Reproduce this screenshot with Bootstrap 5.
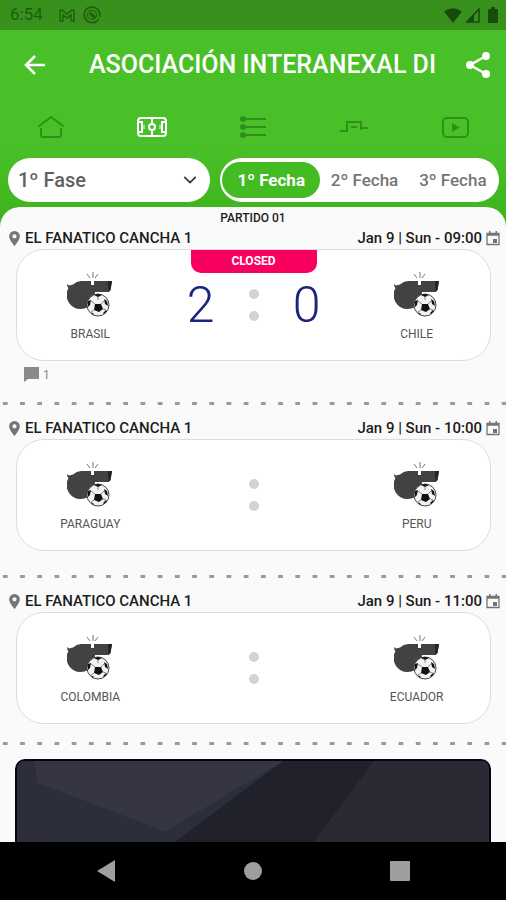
<!DOCTYPE html>
<html lang="es">
<head>
<meta charset="utf-8">
<meta name="viewport" content="width=device-width, initial-scale=1">
<title>Asociación Interanexal</title>
<link href="https://cdn.jsdelivr.net/npm/bootstrap@5.3.0/dist/css/bootstrap.min.css" rel="stylesheet">
<style>
  body { font-family: Roboto, "Liberation Sans", sans-serif; background: #fafafa; color: #1c1c1c; }
  svg { display: block; flex: none; }
  .ink { color: #1f5d0d; }
  .status-bar { height: 30px; background: #38901d; font-size: 17px; padding: 0 8px 0 10px; }
  .green-zone { background: linear-gradient(#4ac028 60%, #3bb31a); padding-bottom: 20px; }
  .title-bar { height: 70px; padding: 0 15px 0 22px; }
  .title-text { font-size: 25px; font-weight: 500; margin: 0 20px 0 41px; line-height: 32px; }
  .tab-link { height: 54px; color: #2f8f16; }
  .tab-link.active { color: #fff; }
  .filters { padding: 4px 7px 5px 8px; gap: 10px; }
  .phase { flex: 0 1 202px; height: 44px; border: 0; font-size: 20px; font-weight: 500; color: #616161; padding: 0 36px 0 10px; background-position: right 11px center; background-size: 18px 14px; }
  .rounds { height: 44px; padding: 4px 2px; flex: 1 1 0; }
  .round-btn { border: 0; background: none; border-radius: 18px; font-size: 17px; font-weight: 500; color: #757575; padding: 0 8px; line-height: 36px; }
  .round-btn.active { background: #43bb22; color: #fff; font-weight: 700; padding: 0 13px; }
  .panel { background: #fafafa; border-radius: 20px 20px 0 0; margin-top: -20px; }
  .panel::-webkit-scrollbar { display: none; }
  .stage { font-size: 12px; font-weight: 500; line-height: 22px; }
  .match-head { font-size: 15px; font-weight: 500; line-height: 18px; padding: 0 6px 2px 8px; color: #1c1c1c; }
  .match-box { margin: 0 15px 0 16px; height: 112px; border: 1px solid #dcdcdc; border-radius: 28px; background: #fff; }
  .team { width: 31%; font-size: 12px; line-height: 16px; color: #555; padding-top: 22px; gap: 8px; }
  .score { font-size: 50px; line-height: 56px; font-weight: 300; color: #1a237e; width: 28px; }
  .middle { gap: 34px; }
  .colon { gap: 12px; }
  .colon i { width: 10px; height: 10px; background: #d3d3d3; border-radius: 50%; }
  .state { width: 126px; line-height: 23px; font-size: 12px; font-weight: 700; background: #f80060; color: #fff; border-radius: 0 0 10px 10px; }
  .comments { color: #8a8a8a; font-size: 12px; line-height: 16px; padding: 6px 24px 0; height: 41px; }
  .dashes { height: 3px; margin-bottom: 14px; background: linear-gradient(90deg, transparent 3px, #9a9a9a 3px 8px, transparent 8px) 0 0 / 3.4% 3px repeat-x; }
  .gap-after { height: 24px; }
  .gap-last { height: 18px; }
  .ad { margin: 0 15px; border: 2px solid #05051a; border-radius: 10px; height: 200px; background: #2c2e3b; }
  .ad svg { width: 100%; height: 100%; }
  .system-nav { height: 58px; background: #000; padding: 0 96px; }
</style>
</head>
<body>
<svg width="0" height="0" class="position-absolute" aria-hidden="true">
  <symbol id="whistle" viewBox="0 0 46 46">
    <path d="M0 12l2 1.500 4-1A14 14 0 0 1 14 9h10v4h3V9h18l-1.500 9-2 2L28 20q0 16-14 17A14 14 0 0 1 1.500 16Q0 15 0 12z" fill="#424242"/>
    <path d="M41 9h4l-1.500 9-2 2z" fill="#222"/>
    <path d="M20 2l3 4M26 0v6M31 2l-3 4" stroke="#777" stroke-width="1" fill="none"/>
    <circle cx="31" cy="33" r="11" fill="#f2f2f2" stroke="#444" stroke-width="1"/>
    <path d="M28 32h6l2 5-4 3-5-2zM27 23l4 2 4-2-4-1zM21 29l3-1-1 5-2 2zM37 27l3 2 1 5-3-2zM36 41l3-3 1 1-3 3zM24 40l3 2-1 1z" fill="#111"/>
    <path d="M28 32l-4-3M34 32l3-3M31 25v3M27 38l-3 2M36 37l3 1" stroke="#888" stroke-width="1"/>
  </symbol>
  <symbol id="pin" viewBox="0 0 10 14">
    <path fill-rule="evenodd" d="M5 0a5 5 0 0 0-5 5c0 3.500 5 9 5 9s5-5.500 5-9a5 5 0 0 0-5-5zm0 3a2 2 0 1 1 0 4 2 2 0 0 1 0-4z" fill="#757575"/>
  </symbol>
  <symbol id="calendar" viewBox="0 0 14 15">
    <path d="M1 2.500h12v11H1zM1 4h12" fill="none" stroke="#757575" stroke-width="1.300"/>
    <path d="M3 0h1.500v3H3zM9.500 0H11v3H9.500zM7 8h4v4H7z" fill="#757575"/>
  </symbol>
</svg>

<div class="vh-100 d-flex flex-column overflow-hidden">
  <div class="status-bar ink d-flex align-items-center flex-shrink-0">
    <span>6:54</span>
    <svg class="ms-3" width="16" height="13" viewBox="0 0 16 13" fill="none" stroke="currentColor" stroke-width="1.400"><path d="M1 12V1.500l2-.5 5 4 5-4 2 .5V12h-3V6L8 9 4 6v6z"/></svg>
    <svg class="ms-2" width="18" height="18" viewBox="0 0 18 18" fill="none" stroke="currentColor" stroke-width="1.600"><path d="M13 15.500A7.800 7.800 0 1 1 16.500 11"/><circle cx="9" cy="9" r="4.500" stroke-width="1.200"/><path d="M7 7l5 5" stroke-width="3"/><path d="M12 17l4-4" stroke-width="1.500"/></svg>
    <svg class="ms-auto" width="18" height="15" viewBox="0 0 18 15" fill="#184a09"><path d="M0 3.500Q9-3 18 3.500L9 15z"/></svg>
    <svg class="ms-1" width="14" height="15" viewBox="0 0 14 15"><path d="M1 14L13 1v13z" fill="none" stroke="#184a09" stroke-width="1.500"/><path d="M1 14l7-8v8z" fill="#184a09"/></svg>
    <svg class="ms-2" width="10" height="16" viewBox="0 0 10 16" fill="#184a09"><path d="M3 0h4v2h2l1 1v12l-1 1H1l-1-1V3l1-1h2z"/></svg>
  </div>

  <header class="green-zone flex-shrink-0">
    <div class="title-bar d-flex align-items-center">
      <button class="btn p-0 border-0" type="button" aria-label="Volver"><svg width="26" height="24" viewBox="0 0 26 24" fill="none" stroke="#fff" stroke-width="2.500"><path d="M23 12H5M13 3l-9 9 9 9"/></svg></button>
      <h1 class="title-text text-white flex-fill text-nowrap mb-0">ASOCIACIÓN INTERANEXAL DI</h1>
      <button class="btn p-0 border-0" type="button" aria-label="Compartir"><svg width="26" height="28" viewBox="0 0 26 28"><path d="M21 5L5 14l16 9" fill="none" stroke="#fff" stroke-width="2.500"/><g fill="#fff"><circle cx="21" cy="5" r="4"/><circle cx="5" cy="14" r="4"/><circle cx="21" cy="23" r="4"/></g></svg></button>
    </div>
    <nav class="row g-0 row-cols-5">
      <a href="#" class="tab-link d-flex align-items-center justify-content-center" aria-label="Inicio"><svg width="28" height="24" viewBox="0 0 28 24" fill="none" stroke="currentColor" stroke-width="2" stroke-linecap="round" stroke-linejoin="round"><path d="M2 11L14 2l12 9M4 14v6q0 2 2 2h16q2 0 2-2v-6"/></svg></a>
      <a href="#" class="tab-link active d-flex align-items-center justify-content-center" aria-label="Partidos"><svg width="30" height="20" viewBox="0 0 30 20" fill="none" stroke="currentColor" stroke-width="2"><rect x="1" y="1" width="28" height="18" rx="3"/><path d="M15 1v6M15 13v6M1 5h4v10H1M29 5h-4v10h4"/><path d="M7 8v4M23 8v4" stroke-width="1"/><circle cx="15" cy="10" r="3"/></svg></a>
      <a href="#" class="tab-link d-flex align-items-center justify-content-center" aria-label="Tabla"><svg width="26" height="22" viewBox="0 0 26 22" fill="none" stroke="currentColor" stroke-width="2"><path d="M3 3h23M3 11h23M3 19h23"/><g fill="currentColor" stroke="none"><circle cx="3" cy="3" r="3"/><circle cx="3" cy="11" r="3"/><circle cx="3" cy="19" r="3"/></g></svg></a>
      <a href="#" class="tab-link d-flex align-items-center justify-content-center" aria-label="Llaves"><svg width="28" height="12" viewBox="0 0 28 12" fill="none" stroke="currentColor" stroke-width="2"><path d="M0 10h7V1h14v6h7M21 7v2M11 6h6"/></svg></a>
      <a href="#" class="tab-link d-flex align-items-center justify-content-center" aria-label="Videos"><svg width="27" height="21" viewBox="0 0 27 21" fill="none" stroke="currentColor" stroke-width="2"><rect x="1" y="1" width="25" height="19" rx="4"/><path d="M10 6l8 4.500-8 4.500z" fill="currentColor" stroke="none"/></svg></a>
    </nav>
    <div class="filters d-flex">
      <select class="form-select rounded-pill phase" aria-label="Fase"><option>1º Fase</option></select>
      <div class="rounds bg-white rounded-pill d-flex" role="group" aria-label="Fecha">
        <button type="button" class="round-btn active flex-fill text-nowrap">1º Fecha</button>
        <button type="button" class="round-btn flex-fill text-nowrap">2º Fecha</button>
        <button type="button" class="round-btn flex-fill text-nowrap">3º Fecha</button>
      </div>
    </div>
  </header>

  <main class="panel flex-fill overflow-auto">
    <div class="stage text-center">PARTIDO 01</div>

    <section>
      <div class="match-head d-flex align-items-center">
        <svg width="13" height="15"><use href="#pin"/></svg><span class="ms-1">EL FANATICO CANCHA 1</span>
        <span class="ms-auto me-1">Jan 9 | Sun - 09:00</span><svg width="14" height="15"><use href="#calendar"/></svg>
      </div>
      <div class="match-box d-flex position-relative">
        <div class="team d-flex flex-column align-items-center"><svg width="46" height="46"><use href="#whistle"/></svg>BRASIL</div>
        <div class="middle flex-fill d-flex align-items-center justify-content-center">
          <span class="score text-center">2</span>
          <span class="colon d-flex flex-column"><i></i><i></i></span>
          <span class="score text-center">0</span>
        </div>
        <div class="team d-flex flex-column align-items-center"><svg width="46" height="46"><use href="#whistle"/></svg>CHILE</div>
        <span class="state position-absolute top-0 start-50 translate-middle-x text-center">CLOSED</span>
      </div>
      <div class="comments d-flex align-items-start gap-1"><svg width="15" height="15" viewBox="0 0 15 15"><path d="M0 0h15v12H4l-4 3z" fill="#8a8a8a"/></svg>1</div>
      <div class="dashes"></div>
    </section>

    <section>
      <div class="match-head d-flex align-items-center">
        <svg width="13" height="15"><use href="#pin"/></svg><span class="ms-1">EL FANATICO CANCHA 1</span>
        <span class="ms-auto me-1">Jan 9 | Sun - 10:00</span><svg width="14" height="15"><use href="#calendar"/></svg>
      </div>
      <div class="match-box d-flex">
        <div class="team d-flex flex-column align-items-center"><svg width="46" height="46"><use href="#whistle"/></svg>PARAGUAY</div>
        <div class="middle flex-fill d-flex align-items-center justify-content-center"><span class="colon d-flex flex-column"><i></i><i></i></span></div>
        <div class="team d-flex flex-column align-items-center"><svg width="46" height="46"><use href="#whistle"/></svg>PERU</div>
      </div>
      <div class="gap-after"></div>
      <div class="dashes"></div>
    </section>

    <section>
      <div class="match-head d-flex align-items-center">
        <svg width="13" height="15"><use href="#pin"/></svg><span class="ms-1">EL FANATICO CANCHA 1</span>
        <span class="ms-auto me-1">Jan 9 | Sun - 11:00</span><svg width="14" height="15"><use href="#calendar"/></svg>
      </div>
      <div class="match-box d-flex">
        <div class="team d-flex flex-column align-items-center"><svg width="46" height="46"><use href="#whistle"/></svg>COLOMBIA</div>
        <div class="middle flex-fill d-flex align-items-center justify-content-center"><span class="colon d-flex flex-column"><i></i><i></i></span></div>
        <div class="team d-flex flex-column align-items-center"><svg width="46" height="46"><use href="#whistle"/></svg>ECUADOR</div>
      </div>
      <div class="gap-last"></div>
      <div class="dashes"></div>
    </section>

    <div class="ad overflow-hidden">
      <svg viewBox="0 0 475 200" preserveAspectRatio="xMidYMin slice" aria-hidden="true">
        <path d="M0 0h475v200H0z" fill="#2c2e3b"/>
        <path d="M0 0h18l14 90v110H0z" fill="#2e2e3a"/>
        <path d="M18 0l2 22 129 49L268 0z" fill="#363643"/>
        <path d="M268 0h91L235 168v32H0z" fill="#21212c"/>
        <path d="M0 200L149 71 20 22 32 200z" fill="#2c2e3b"/>
        <path d="M359 0h116v200H212z" fill="#292a33"/>
      </svg>
    </div>
  </main>

  <nav class="system-nav d-flex align-items-center justify-content-between flex-shrink-0">
    <button class="btn p-0 border-0" type="button" aria-label="Atrás"><svg width="20" height="22" viewBox="0 0 20 22"><path d="M1 11L19 0v22z" fill="#9e9e9e"/></svg></button>
    <button class="btn p-0 border-0" type="button" aria-label="Inicio del sistema"><svg width="20" height="20"><circle cx="10" cy="10" r="9" fill="#9e9e9e"/></svg></button>
    <button class="btn p-0 border-0" type="button" aria-label="Recientes"><svg width="20" height="20"><rect width="20" height="20" rx="1" fill="#9e9e9e"/></svg></button>
  </nav>
</div>
<script src="https://cdn.jsdelivr.net/npm/bootstrap@5.3.0/dist/js/bootstrap.bundle.min.js"></script>
</body>
</html>
